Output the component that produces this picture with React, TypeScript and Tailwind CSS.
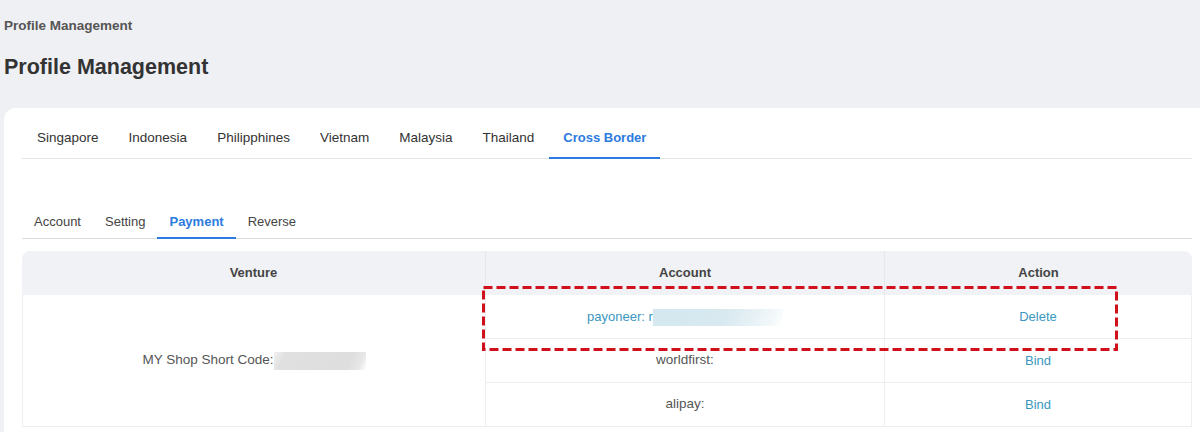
const countries = ["Singapore", "Indonesia", "Philipphines", "Vietnam", "Malaysia", "Thailand", "Cross Border"];
const subTabs = ["Account", "Setting", "Payment", "Reverse"];

function Redacted({ className }: { className: string }) {
  return <span className={`inline-block align-middle ${className}`} />;
}

export default function App() {
  return (
    <div className="min-h-screen overflow-hidden bg-[#eff0f4] pl-1 font-['Liberation_Sans',Arial,sans-serif]">
      <div className="pt-[18px] text-[13.5px] font-bold leading-4 text-[#555]">Profile Management</div>
      <h1 className="mt-[20px] text-[21.5px] font-bold leading-[26px] text-[#333]">Profile Management</h1>

      <div className="mt-[28px] rounded-tl-xl bg-white pl-[18px] pr-2 pt-[20px] pb-6">
        {/* country tabs */}
        <div className="flex border-b border-[#e2e4e8]">
          {countries.map((c) => (
            <div
              key={c}
              className={
                c === "Cross Border"
                  ? "-mb-px border-b-2 border-[#2b7be0] px-[14px] pb-[9px] text-[13px] font-semibold leading-5 text-[#2b7be0]"
                  : "-mb-px border-b-2 border-transparent px-[15px] pb-[9px] text-[13.5px] leading-5 text-[#333]"
              }
            >
              {c}
            </div>
          ))}
        </div>

        {/* sub tabs */}
        <div className="mt-[53px] flex border-b border-[#d9dce1]">
          {subTabs.map((t) => (
            <div
              key={t}
              className={
                t === "Payment"
                  ? "-mb-px border-b-2 border-[#2b7be0] px-3 pb-[5px] text-[13px] font-semibold leading-5 text-[#2b7be0]"
                  : "-mb-px border-b-2 border-transparent px-3 pb-[5px] text-[13px] leading-5 text-[#444]"
              }
            >
              {t}
            </div>
          ))}
        </div>

        {/* payment table */}
        <div className="relative mt-3">
          <table className="w-full table-fixed border-separate border-spacing-0 text-[13.5px] text-[#555]">
            <colgroup>
              <col className="w-[464px]" />
              <col className="w-[399px]" />
              <col />
            </colgroup>
            <thead>
              <tr className="h-11 bg-[#f1f2f5] text-[13px] font-bold text-[#444]">
                <th className="rounded-tl-lg border-r border-[#e6e8ec]">Venture</th>
                <th className="border-r border-[#e6e8ec]">Account</th>
                <th className="rounded-tr-lg">Action</th>
              </tr>
            </thead>
            <tbody>
              <tr className="h-11">
                <td rowSpan={3} className="border-b border-l border-r border-[#eceef1] text-center">
                  MY Shop Short Code:
                  <Redacted className="h-[18px] w-[92px] bg-[linear-gradient(115deg,#f1f1f1_0%,#e0e0e0_12%,#dedede_80%,#e8e8e8_92%,#ffffff_100%)]" />
                </td>
                <td className="border-b border-r border-[#eceef1] text-center text-[13px] text-[#3a97c0]">
                  payoneer: r
                  <Redacted className="h-[17px] w-[130px] bg-[linear-gradient(115deg,#d5e8ef_0%,#d8e9f0_55%,#e6f1f5_75%,#f2f8fa_90%,#ffffff_100%)]" />
                </td>
                <td className="border-b border-r border-[#eceef1] text-center text-[13px] text-[#3a97c0]">Delete</td>
              </tr>
              <tr className="h-11">
                <td className="border-b border-r border-[#eceef1] text-center">worldfirst:</td>
                <td className="border-b border-r border-[#eceef1] text-center text-[13px] text-[#3a97c0]">Bind</td>
              </tr>
              <tr className="h-11">
                <td className="border-b border-r border-[#eceef1] text-center">alipay:</td>
                <td className="border-b border-r border-[#eceef1] text-center text-[13px] text-[#3a97c0]">Bind</td>
              </tr>
            </tbody>
          </table>

          {/* annotation box */}
          <svg className="absolute left-[460px] top-[35px]" width="636" height="65" viewBox="0 0 636 65">
            <rect x="1.5" y="1.5" width="633" height="62" fill="none" stroke="#d0111b" strokeWidth="3" strokeDasharray="9 4" />
          </svg>
        </div>
      </div>
    </div>
  );
}
